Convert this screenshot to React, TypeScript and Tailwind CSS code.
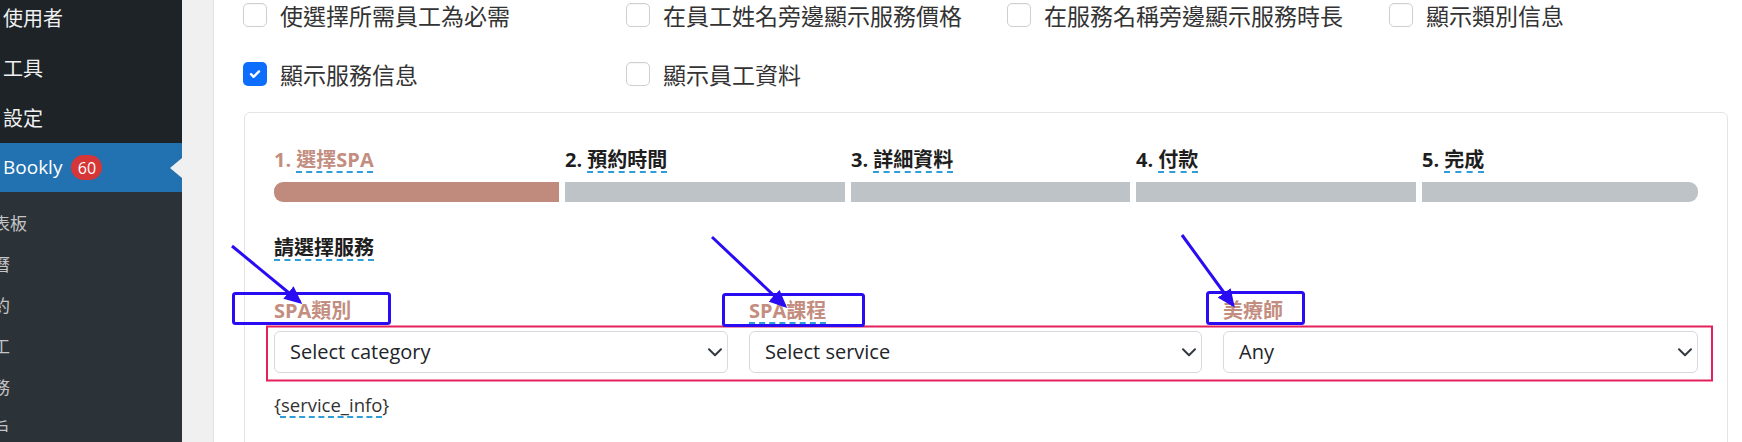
import React from 'react'

const cjk = "font-['Noto_Sans_CJK_TC',sans-serif]"
const mixed = "font-['Open_Sans','Noto_Sans_CJK_TC',sans-serif]"
const spell = 'underline decoration-dashed decoration-[#2f9ed8] decoration-[2px] underline-offset-[4px]'

const topMenu = ['使用者', '工具', '設定']
const subMenu = ['儀表板', '日曆', '預約', '員工', '服務', '客戶']

const options = [
  [{ label: '使選擇所需員工為必需', checked: false }, { label: '在員工姓名旁邊顯示服務價格', checked: false }, { label: '在服務名稱旁邊顯示服務時長', checked: false }, { label: '顯示類別信息', checked: false }],
  [{ label: '顯示服務信息', checked: true }, { label: '顯示員工資料', checked: false }],
]

const steps = [
  { num: '1.', name: '選擇SPA', active: true },
  { num: '2.', name: '預約時間', active: false },
  { num: '3.', name: '詳細資料', active: false },
  { num: '4.', name: '付款', active: false },
  { num: '5.', name: '完成', active: false },
]

const fields = [
  { label: 'SPA類別', value: 'Select category' },
  { label: 'SPA課程', value: 'Select service' },
  { label: '美療師', value: 'Any' },
]

function Checkbox({ checked }: { checked: boolean }) {
  if (checked) {
    return (
      <span className="w-[24px] h-[24px] shrink-0 rounded-[5px] bg-[#0d6efd] flex items-center justify-center">
        <svg width="14" height="14" viewBox="0 0 14 14" fill="none">
          <path d="M3 7.2l2.6 2.6L11 4.4" stroke="#fff" strokeWidth="2.4" strokeLinecap="round" strokeLinejoin="round" />
        </svg>
      </span>
    )
  }
  return <span className="w-[24px] h-[24px] shrink-0 rounded-[5px] border-[1.5px] border-[#cfcfcf] bg-white shadow-[inset_0_1px_1px_rgba(0,0,0,0.04)]" />
}

function Chevron() {
  return (
    <svg width="16" height="16" viewBox="0 0 16 16" fill="none">
      <path d="M2 5.2l6 6 6-6" stroke="#343a40" strokeWidth="2" strokeLinecap="round" strokeLinejoin="round" />
    </svg>
  )
}

function Sidebar() {
  return (
    <aside className={`w-[182px] shrink-0 flex flex-col bg-[#1d2327] overflow-hidden ${cjk}`}>
      <div className="-mt-[7px]">
        {topMenu.map(t => (
          <div key={t} className="h-[50px] flex items-center pl-[3px] text-[20px] text-[#f0f0f1]">
            {t}
          </div>
        ))}
      </div>
      <div className="relative h-[49px] shrink-0 bg-[#2271b1] flex items-center pl-[3px] gap-[9px]">
        <span className="font-['Open_Sans',sans-serif] text-[19px] text-white">Bookly</span>
        <span className="h-[25px] min-w-[31px] px-[6px] rounded-full bg-[#d63638] text-white text-[16px] font-['Open_Sans',sans-serif] flex items-center justify-center">
          60
        </span>
        {/* current menu pointer */}
        <span className="absolute right-0 top-1/2 -translate-y-1/2 w-0 h-0 border-y-[10px] border-y-transparent border-r-[12px] border-r-[#f0f0f1]" />
      </div>
      <div className="flex-1 bg-[#2c3338] pt-[10px]">
        {subMenu.map(t => (
          <div key={t} className="h-[41px] flex items-center -ml-[24px] text-[17px] text-[#c3c4c7] whitespace-nowrap">
            {t}
          </div>
        ))}
      </div>
    </aside>
  )
}

function Annotations() {
  const blue = '#2a0cf2'
  const arrows = [
    [232, 246, 300, 302],
    [712, 237, 785, 306],
    [1182, 235, 1233, 305],
  ]
  return (
    <svg className="absolute inset-0 pointer-events-none" width="1742" height="442" viewBox="0 0 1742 442">
      <defs>
        <marker id="head" markerWidth="18" markerHeight="16" refX="15" refY="8" orient="auto" markerUnits="userSpaceOnUse">
          <path d="M0 0L18 8L0 16z" fill={blue} />
        </marker>
      </defs>
      <rect x="267" y="326.5" width="1445" height="54" fill="none" stroke="#e3215a" strokeWidth="2" />
      <rect x="233.5" y="293.5" width="156" height="30" rx="2" fill="none" stroke={blue} strokeWidth="3" />
      <rect x="723.5" y="294.5" width="140" height="31" rx="2" fill="none" stroke={blue} strokeWidth="3" />
      <rect x="1207.5" y="292.5" width="96" height="31" rx="2" fill="none" stroke={blue} strokeWidth="3" />
      {arrows.map(([x1, y1, x2, y2], i) => (
        <line key={i} x1={x1} y1={y1} x2={x2} y2={y2} stroke={blue} strokeWidth="3" markerEnd="url(#head)" />
      ))}
    </svg>
  )
}

export default function App() {
  return (
    <div className="relative flex h-[442px] w-[1742px] overflow-hidden bg-white">
      <Sidebar />
      <div className="w-[32px] shrink-0 bg-[#f0f0f1] border-r border-[#e3e4e6]" />

      <main className="flex-1 pl-[29px] pr-[14px] pt-[3px]">
        {/* form options */}
        <div className="flex flex-col gap-y-[35px]">
          {options.map((row, ri) => (
            <div key={ri} className="grid grid-cols-[383px_381px_382px_1fr]">
              {row.map(o => (
                <label key={o.label} className="h-[24px] flex items-center gap-[13px]">
                  <Checkbox checked={o.checked} />
                  <span className={`${cjk} text-[23px] leading-[24px] text-[#333] whitespace-nowrap`}>{o.label}</span>
                </label>
              ))}
            </div>
          ))}
        </div>

        {/* booking form preview */}
        <div className="mt-[26px] ml-px rounded-[6px] border border-[#e4e4e4] px-[29px] pt-[35px] pb-[60px]">
          <div className="grid grid-cols-[285px_280px_279px_280px_1fr] gap-x-[6px]">
            {steps.map((s, i) => (
              <div key={s.num}>
                <div className={`${mixed} text-[20px] leading-[24px] font-bold whitespace-nowrap ${s.active ? 'text-[#c38e7f]' : 'text-[#1e1e1e]'}`}>
                  {s.num} <span className={spell}>{s.name}</span>
                </div>
                <div
                  className={`mt-[10px] h-[20px] ${s.active ? 'bg-[#c08b7c]' : 'bg-[#bec3c8]'} ${i === 0 ? 'rounded-l-[9px]' : ''} ${i === steps.length - 1 ? 'rounded-r-[9px]' : ''}`}
                />
              </div>
            ))}
          </div>

          <div className={`mt-[34px] ${mixed} text-[20px] leading-[24px] font-bold text-[#1e1e1e]`}>
            <span className={spell}>請選擇服務</span>
          </div>

          <div className="mt-[39px] grid grid-cols-[454px_453px_1fr] gap-x-[21px]">
            {fields.map(f => (
              <div key={f.label}>
                <div className={`${mixed} text-[20px] leading-[24px] font-bold text-[#c38e7f]`}>
                  <span className={spell}>{f.label}</span>
                </div>
                <div className="mt-[8px] h-[42px] rounded-[6px] border border-[#d6d9dd] bg-white flex items-center justify-between pl-[15px] pr-[4px]">
                  <span className="font-['Open_Sans',sans-serif] text-[20px] text-[#212529]">{f.value}</span>
                  <Chevron />
                </div>
              </div>
            ))}
          </div>

          <div className="mt-[21px] font-['Open_Sans',sans-serif] text-[18.5px] leading-[22px] text-[#333]">
            {'{'}
            <span className={spell}>service_info</span>
            {'}'}
          </div>
        </div>
      </main>

      <Annotations />
    </div>
  )
}
